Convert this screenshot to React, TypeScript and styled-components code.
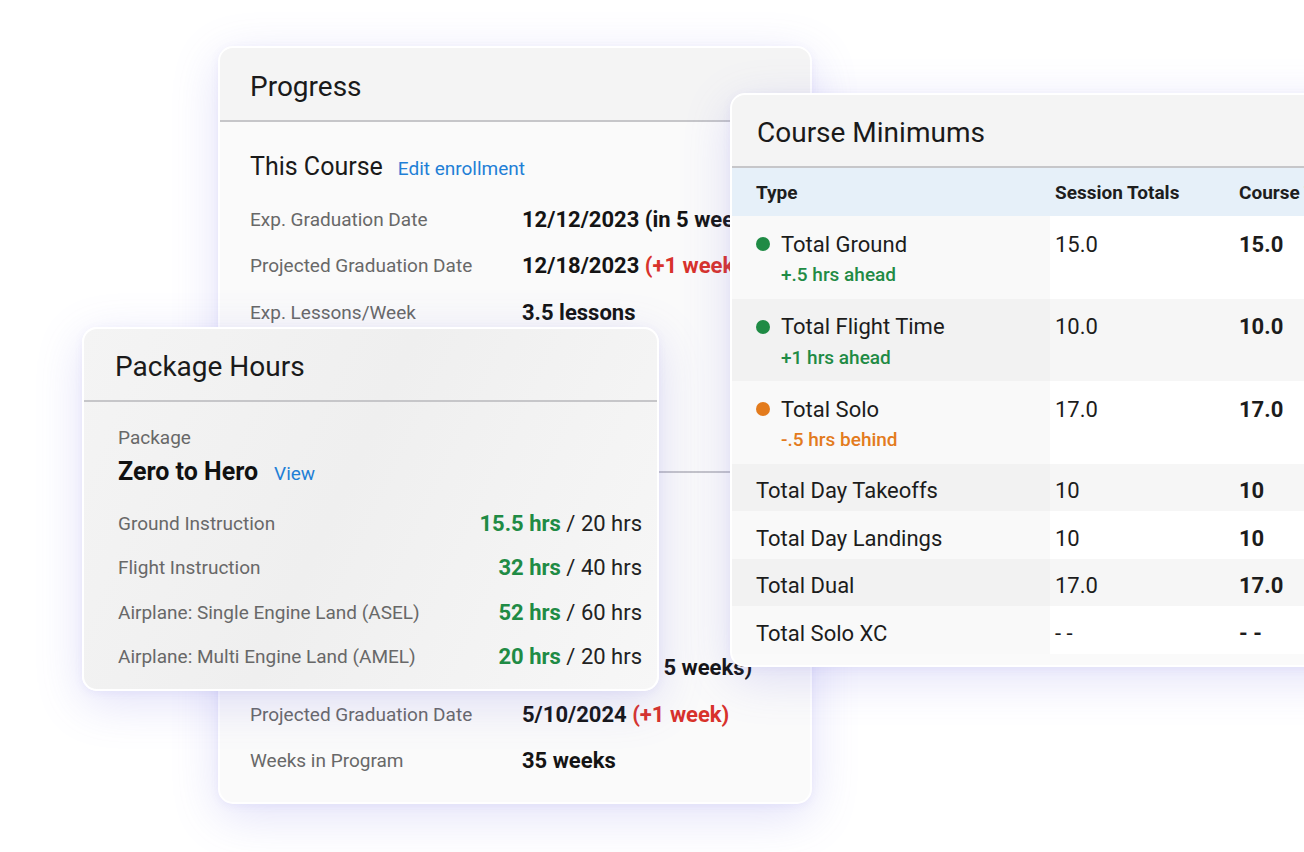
import React from 'react';
import styled, { createGlobalStyle } from 'styled-components';

const GlobalStyle = createGlobalStyle`
  html, body {
    margin: 0;
    padding: 0;
    background: #ffffff;
    font-family: Roboto, "Liberation Sans", Arial, sans-serif;
    color: #1c1c1c;
  }
`;

const Canvas = styled.div`
  position: relative;
  width: 1304px;
  height: 852px;
  overflow: hidden;
  background: #ffffff;
`;

const Card = styled.div<{ $left: number; $top: number; $width: number; $height: number; $z: number }>`
  position: absolute;
  left: ${(p) => p.$left}px;
  top: ${(p) => p.$top}px;
  width: ${(p) => p.$width}px;
  height: ${(p) => p.$height}px;
  z-index: ${(p) => p.$z};
  box-sizing: border-box;
  border: 2px solid #ffffff;
  border-radius: 15px;
  background: #fafafa;
  box-shadow: 0 12px 48px rgba(112, 104, 226, 0.2), 0 2px 8px rgba(112, 104, 226, 0.08);
  overflow: hidden;
  display: flex;
  flex-direction: column;
`;

const GlassCard = styled(Card)`
  background: linear-gradient(115deg, #f4f4f4 0%, #efefef 45%, #f7f7f7 100%);
`;

const CardHeader = styled.div<{ $pad: number; $height: number }>`
  height: ${(p) => p.$height}px;
  flex: none;
  box-sizing: border-box;
  display: flex;
  align-items: center;
  padding: 4px 0 0 ${(p) => p.$pad}px;
  background: #f4f4f4;
  border-bottom: 2px solid #c6c6c9;
  font-size: 28px;
  font-weight: 400;
  color: #1a1a1a;
`;

const GlassHeader = styled(CardHeader)`
  background: transparent;
`;

/* Progress card */

const Section = styled.div<{ $top: number; $bottom: number; $divider?: boolean }>`
  padding: ${(p) => p.$top}px 32px ${(p) => p.$bottom}px 30px;
  border-bottom: ${(p) => (p.$divider ? '2px solid #c4c4c9' : 'none')};
`;

const SectionTitle = styled.div`
  display: flex;
  align-items: baseline;
  gap: 15px;
  height: 30px;
  line-height: 30px;
  margin-bottom: 14px;
  font-size: 25px;
  color: #1a1a1a;
`;

const Link = styled.span<{ $size: number }>`
  font-size: ${(p) => p.$size}px;
  font-weight: 400;
  color: #1f7fd6;
`;

const InfoGrid = styled.div`
  display: grid;
  grid-template-columns: 272px 1fr;
  grid-auto-rows: 46.5px;
  align-items: center;
`;

const InfoLabel = styled.div`
  font-size: 19px;
  color: #686868;
  white-space: nowrap;
`;

const InfoValue = styled.div`
  font-size: 22px;
  font-weight: 700;
  color: #141414;
  white-space: nowrap;
`;

const Late = styled.span`
  color: #d8322b;
`;

/* Package card */

const PackageBody = styled.div`
  padding: 25px 15px 12px 34px;
  display: flex;
  flex-direction: column;
`;

const SmallLabel = styled.div`
  font-size: 19px;
  line-height: 22px;
  color: #686868;
`;

const PackageName = styled.div`
  display: flex;
  align-items: baseline;
  gap: 16px;
  height: 30px;
  line-height: 30px;
  margin: 8px 0 14px;
  font-size: 25px;
  font-weight: 700;
  color: #111;
`;

const HoursGrid = styled.div`
  display: grid;
  grid-template-columns: 1fr auto;
  grid-auto-rows: 44.5px;
  align-items: center;
`;

const HoursValue = styled.div`
  font-size: 22px;
  color: #222;
  text-align: right;
  white-space: nowrap;
`;

const Used = styled.span`
  color: #1f8b45;
  font-weight: 700;
`;

/* Course minimums */

const Table = styled.div`
  display: grid;
  grid-template-columns: 318px 184px 1fr;
`;

const HeadCell = styled.div<{ $first?: boolean }>`
  height: 48px;
  display: flex;
  align-items: center;
  padding-left: ${(p) => (p.$first ? 24 : 5)}px;
  background: #e6f0f9;
  font-size: 19px;
  font-weight: 700;
  color: #1e1e1e;
  white-space: nowrap;
`;

const Cell = styled.div<{ $first?: boolean; $shade: boolean; $tall: boolean; $bold?: boolean }>`
  height: ${(p) => (p.$tall ? 82.6 : 47.5)}px;
  box-sizing: border-box;
  display: flex;
  flex-direction: column;
  justify-content: ${(p) => (p.$tall ? 'flex-start' : 'center')};
  padding: ${(p) => (p.$tall ? '14px' : '6px')} 0 0 ${(p) => (p.$first ? 24 : 5)}px;
  background: ${(p) =>
    p.$first ? (p.$shade ? '#f2f2f2' : '#f9f9f9') : p.$shade ? '#f6f6f6' : '#ffffff'};
  font-size: 22px;
  font-weight: ${(p) => (p.$bold ? 700 : 400)};
  color: #1c1c1c;
  white-space: nowrap;
`;

const TypeLine = styled.div`
  display: flex;
  align-items: center;
  gap: 11px;
  height: 28px;
`;

const Dot = styled.span<{ $color: string }>`
  width: 14px;
  height: 14px;
  border-radius: 50%;
  background: ${(p) => p.$color};
  flex: none;
`;

const Status = styled.div<{ $color: string }>`
  margin: 6px 0 0 25px;
  font-size: 19px;
  line-height: 22px;
  font-weight: 500;
  color: ${(p) => p.$color};
`;

const GREEN = '#1f8b45';
const ORANGE = '#e37b1d';

type Info = { label: string; value: React.ReactNode };

const courseRows: Info[] = [
  { label: 'Exp. Graduation Date', value: '12/12/2023 (in 5 weeks)' },
  { label: 'Projected Graduation Date', value: <>12/18/2023 <Late>(+1 week)</Late></> },
  { label: 'Exp. Lessons/Week', value: '3.5 lessons' },
  { label: 'Weeks in Course', value: '12 weeks' },
  { label: 'Lessons Completed', value: '38 lessons' },
];

const programRows: Info[] = [
  { label: 'Program', value: 'Private Pilot' },
  { label: 'Start Date', value: '9/5/2023' },
  { label: 'Exp. Graduation Date', value: '4/26/2024 (in 5 weeks)' },
  { label: 'Projected Graduation Date', value: <>5/10/2024 <Late>(+1 week)</Late></> },
  { label: 'Weeks in Program', value: '35 weeks' },
];

const packageRows = [
  { label: 'Ground Instruction', used: '15.5 hrs', total: '20 hrs' },
  { label: 'Flight Instruction', used: '32 hrs', total: '40 hrs' },
  { label: 'Airplane: Single Engine Land (ASEL)', used: '52 hrs', total: '60 hrs' },
  { label: 'Airplane: Multi Engine Land (AMEL)', used: '20 hrs', total: '20 hrs' },
];

type MinRow = {
  type: string;
  session: string;
  course: string;
  dot?: string;
  status?: string;
};

const minRows: MinRow[] = [
  { type: 'Total Ground', session: '15.0', course: '15.0', dot: GREEN, status: '+.5 hrs ahead' },
  { type: 'Total Flight Time', session: '10.0', course: '10.0', dot: GREEN, status: '+1 hrs ahead' },
  { type: 'Total Solo', session: '17.0', course: '17.0', dot: ORANGE, status: '-.5 hrs behind' },
  { type: 'Total Day Takeoffs', session: '10', course: '10' },
  { type: 'Total Day Landings', session: '10', course: '10' },
  { type: 'Total Dual', session: '17.0', course: '17.0' },
  { type: 'Total Solo XC', session: '- -', course: '- -' },
];

const InfoList = ({ rows }: { rows: Info[] }) => (
  <InfoGrid>
    {rows.map((r) => (
      <React.Fragment key={r.label}>
        <InfoLabel>{r.label}</InfoLabel>
        <InfoValue>{r.value}</InfoValue>
      </React.Fragment>
    ))}
  </InfoGrid>
);

const ProgressCard = () => (
  <Card $left={218} $top={46} $width={594} $height={758} $z={1}>
    <CardHeader $pad={30} $height={74}>Progress</CardHeader>
    <Section $top={30} $bottom={42} $divider>
      <SectionTitle>
        This Course <Link $size={19}>Edit enrollment</Link>
      </SectionTitle>
      <InfoList rows={courseRows} />
    </Section>
    <Section $top={35} $bottom={20}>
      <SectionTitle>
        This Program <Link $size={19}>Edit enrollment</Link>
      </SectionTitle>
      <InfoList rows={programRows} />
    </Section>
  </Card>
);

const PackageCard = () => (
  <GlassCard $left={82} $top={327} $width={577} $height={364} $z={2}>
    <GlassHeader $pad={31} $height={73}>Package Hours</GlassHeader>
    <PackageBody>
      <SmallLabel>Package</SmallLabel>
      <PackageName>
        Zero to Hero <Link $size={19}>View</Link>
      </PackageName>
      <HoursGrid>
        {packageRows.map((r) => (
          <React.Fragment key={r.label}>
            <InfoLabel>{r.label}</InfoLabel>
            <HoursValue>
              <Used>{r.used}</Used> / {r.total}
            </HoursValue>
          </React.Fragment>
        ))}
      </HoursGrid>
    </PackageBody>
  </GlassCard>
);

const MinimumsCard = () => (
  <Card $left={730} $top={93} $width={640} $height={574} $z={3}>
    <CardHeader $pad={25} $height={73}>Course Minimums</CardHeader>
    <Table>
      <HeadCell $first>Type</HeadCell>
      <HeadCell>Session Totals</HeadCell>
      <HeadCell>Course Totals</HeadCell>
      {minRows.map((r, i) => {
        const shade = i % 2 === 1 || i === 3 || i === 5;
        const tall = !!r.status;
        return (
          <React.Fragment key={r.type}>
            <Cell $first $shade={shade} $tall={tall}>
              <TypeLine>
                {r.dot && <Dot $color={r.dot} />}
                {r.type}
              </TypeLine>
              {r.status && <Status $color={r.dot as string}>{r.status}</Status>}
            </Cell>
            <Cell $shade={shade} $tall={tall}>
              <TypeLine>{r.session}</TypeLine>
            </Cell>
            <Cell $shade={shade} $tall={tall} $bold>
              <TypeLine>{r.course}</TypeLine>
            </Cell>
          </React.Fragment>
        );
      })}
    </Table>
  </Card>
);

export default function App() {
  return (
    <>
      <GlobalStyle />
      <Canvas>
        <ProgressCard />
        <PackageCard />
        <MinimumsCard />
      </Canvas>
    </>
  );
}
